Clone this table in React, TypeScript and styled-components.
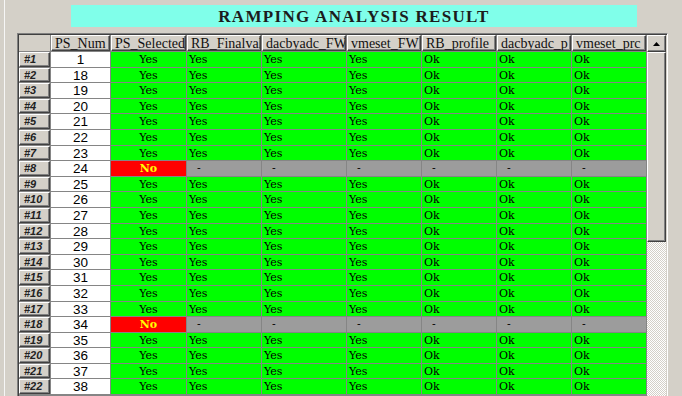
import React from "react";
import styled, { createGlobalStyle, css } from "styled-components";

const GlobalStyle = createGlobalStyle`
  html, body {
    margin: 0;
    padding: 0;
    background: #d4d0c8;
  }
`;

const COLUMNS = [
  "PS_Num",
  "PS_Selected",
  "RB_Finalval",
  "dacbyadc_FW",
  "vmeset_FW",
  "RB_profile",
  "dacbyadc_p",
  "vmeset_prc",
];

const WIDTHS = "31px 59px 75px 74px 84px 74px 74px 74px 74px";

const raised = css`
  background: #d4d0c8;
  border-top: 1px solid #ffffff;
  border-left: 1px solid #ffffff;
  border-right: 1px solid #404040;
  border-bottom: 1px solid #404040;
  box-shadow: inset -1px -1px 0 #808080;
  box-sizing: border-box;
`;

const Window = styled.div`
  height: 396px;
  margin-left: 4px;
  padding-top: 5px;
  border-left: 1px solid #f6f6f6;
  box-sizing: border-box;
  overflow: hidden;
`;

const TitleBar = styled.div`
  margin-left: 66px;
  width: 566px;
  height: 22px;
  background: #80ffea;
  color: #1c1c1c;
  font-family: "Liberation Serif", "Times New Roman", serif;
  font-size: 17px;
  font-weight: bold;
  letter-spacing: 1.3px;
  line-height: 23px;
  text-align: center;
`;

const Frame = styled.div`
  display: flex;
  margin-top: 6px;
  margin-left: 12px;
  width: 651px;
  height: 370px;
  border-top: 1px solid #808080;
  border-left: 1px solid #808080;
  border-right: 1px solid #ffffff;
  border-bottom: 1px solid #ffffff;
  box-shadow: inset 1px 1px 0 #404040;
  padding: 1px 1px 0 1px;
  box-sizing: border-box;
`;

const Grid = styled.div`
  display: grid;
  grid-template-columns: ${WIDTHS};
  grid-template-rows: 16px;
  grid-auto-rows: 14.6px;
  column-gap: 1px;
  row-gap: 1px;
  padding-right: 1px;
  background: #858585;
  align-content: start;
`;

const Corner = styled.div`
  background: #d4d0c8;
`;

const HeaderCell = styled.div`
  ${raised};
  padding: 0 0 0 3px;
  font-family: "Liberation Serif", "Times New Roman", serif;
  font-size: 14px;
  line-height: 15px;
  color: #111;
  white-space: nowrap;
  overflow: hidden;
`;

const RowHead = styled.div`
  ${raised};
  padding-left: 4px;
  font-family: "Liberation Sans", Arial, sans-serif;
  font-size: 11px;
  font-weight: bold;
  font-style: italic;
  line-height: 13px;
  color: #222;
  white-space: nowrap;
  overflow: hidden;
`;

const NumCell = styled.div`
  background: #ffffff;
  font-family: "Liberation Sans", Arial, sans-serif;
  font-size: 13.5px;
  line-height: 15px;
  text-align: center;
  color: #000;
`;

type Kind = "ok" | "no" | "na";

const bg: Record<Kind, string> = {
  ok: "#00ff00",
  no: "#ff0000",
  na: "#9c9c9c",
};

const Cell = styled.div<{ $kind: Kind; $center?: boolean }>`
  background: ${({ $kind }) => bg[$kind]};
  color: ${({ $kind }) => ($kind === "no" ? "#ffff00" : "#000")};
  font-family: "DejaVu Serif", "Courier New", serif;
  font-size: 11px;
  font-weight: ${({ $kind }) => ($kind === "no" ? "bold" : "normal")};
  line-height: 15px;
  white-space: nowrap;
  overflow: hidden;
  text-align: ${({ $center }) => ($center ? "center" : "left")};
  padding-left: ${({ $center, $kind }) =>
    $center ? "0" : $kind === "na" ? "10px" : "2px"};
`;

const ScrollBar = styled.div`
  display: flex;
  flex-direction: column;
  width: 19px;
`;

const ArrowButton = styled.div`
  ${raised};
  height: 17px;
  display: flex;
  align-items: center;
  justify-content: center;
`;

const Thumb = styled.div`
  ${raised};
  height: 190px;
`;

const Track = styled.div`
  flex: 1;
  background-color: #f2f2f2;
  background-image: repeating-conic-gradient(#d4d0c8 0 25%, #ffffff 0 50%);
  background-size: 2px 2px;
`;

const rows = Array.from({ length: 22 }, (_, i) => {
  const n = i + 1;
  return {
    label: `#${n}`,
    num: n === 1 ? 1 : n + 16,
    selected: n !== 8 && n !== 18,
  };
});

export default function App() {
  return (
    <>
      <GlobalStyle />
      <Window>
        <TitleBar>RAMPING ANALYSIS RESULT</TitleBar>
        <Frame>
          <Grid>
            <Corner />
            {COLUMNS.map((c) => (
              <HeaderCell key={c}>{c}</HeaderCell>
            ))}
            {rows.map((r) => (
              <React.Fragment key={r.label}>
                <RowHead>{r.label}</RowHead>
                <NumCell>{r.num}</NumCell>
                {r.selected ? (
                  <>
                    <Cell $kind="ok" $center>Yes</Cell>
                    <Cell $kind="ok">Yes</Cell>
                    <Cell $kind="ok">Yes</Cell>
                    <Cell $kind="ok">Yes</Cell>
                    <Cell $kind="ok">Ok</Cell>
                    <Cell $kind="ok">Ok</Cell>
                    <Cell $kind="ok">Ok</Cell>
                  </>
                ) : (
                  <>
                    <Cell $kind="no" $center>No</Cell>
                    {Array.from({ length: 6 }, (_, k) => (
                      <Cell key={k} $kind="na">-</Cell>
                    ))}
                  </>
                )}
              </React.Fragment>
            ))}
          </Grid>
          <ScrollBar>
            <ArrowButton>
              <svg width="7" height="4" viewBox="0 0 7 4">
                <path d="M3.5 0 L7 4 L0 4 Z" fill="#000" />
              </svg>
            </ArrowButton>
            <Thumb />
            <Track />
          </ScrollBar>
        </Frame>
      </Window>
    </>
  );
}
